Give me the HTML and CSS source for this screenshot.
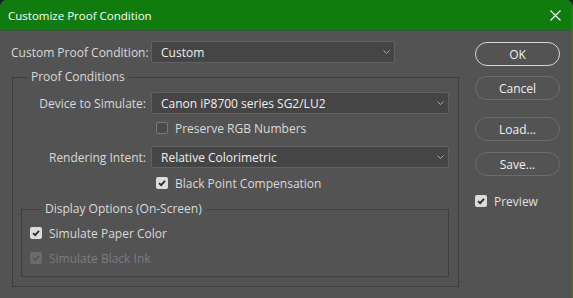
FILE: index.html
```html
<!DOCTYPE html>
<html lang="en">
<head>
    <meta charset="UTF-8">
    <title>Customize Proof Condition</title>
    <link rel="stylesheet" href="styles.css">
</head>
<body>
<div class="window">
    <header class="titlebar">
        <span class="title">Customize Proof Condition</span>
        <svg class="close" width="11" height="11" viewBox="0 0 11 11"><path d="M0.5 0.5L10.5 10.5M10.5 0.5L0.5 10.5" stroke="#fff" stroke-width="1.1" fill="none"/></svg>
    </header>

    <div class="content">
        <div class="main">
            <div class="row top-row">
                <label class="label">Custom Proof Condition:</label>
                <div class="select short">Custom
                    <svg class="chev" width="7" height="4" viewBox="0 0 7 4"><path d="M0.5 0.5L3.5 3.5L6.5 0.5" stroke="#a8a8a8" fill="none"/></svg>
                </div>
            </div>

            <!-- Proof Conditions group -->
            <fieldset class="group proof">
                <legend>Proof Conditions</legend>
                <div class="row">
                    <label class="label">Device to Simulate:</label>
                    <div class="select">Canon iP8700 series SG2/LU2
                        <svg class="chev" width="7" height="4" viewBox="0 0 7 4"><path d="M0.5 0.5L3.5 3.5L6.5 0.5" stroke="#a8a8a8" fill="none"/></svg>
                    </div>
                </div>
                <div class="row check-line first">
                    <span></span>
                    <div class="check"><span class="box"></span>Preserve RGB Numbers</div>
                </div>
                <div class="row intent">
                    <label class="label">Rendering Intent:</label>
                    <div class="select">Relative Colorimetric
                        <svg class="chev" width="7" height="4" viewBox="0 0 7 4"><path d="M0.5 0.5L3.5 3.5L6.5 0.5" stroke="#a8a8a8" fill="none"/></svg>
                    </div>
                </div>
                <div class="row check-line second">
                    <span></span>
                    <div class="check"><span class="box checked"><svg width="12" height="12" viewBox="0 0 12 12"><path d="M3 6.2L5.1 8.2L9 3.8" stroke="#2b2b2b" stroke-width="1.8" fill="none"/></svg></span>Black Point Compensation</div>
                </div>

                <!-- Display Options group -->
                <fieldset class="group display">
                    <legend>Display Options (On-Screen)</legend>
                    <div class="check paper"><span class="box checked"><svg width="12" height="12" viewBox="0 0 12 12"><path d="M3 6.2L5.1 8.2L9 3.8" stroke="#2b2b2b" stroke-width="1.8" fill="none"/></svg></span>Simulate Paper Color</div>
                    <div class="check ink disabled"><span class="box checked"><svg width="12" height="12" viewBox="0 0 12 12"><path d="M3 6.2L5.1 8.2L9 3.8" stroke="#555" stroke-width="1.8" fill="none"/></svg></span>Simulate Black Ink</div>
                </fieldset>
            </fieldset>
        </div>

        <div class="side">
            <button class="btn default">OK</button>
            <button class="btn cancel">Cancel</button>
            <button class="btn load">Load...</button>
            <button class="btn save">Save...</button>
            <div class="check preview"><span class="box checked"><svg width="12" height="12" viewBox="0 0 12 12"><path d="M3 6.2L5.1 8.2L9 3.8" stroke="#2b2b2b" stroke-width="1.8" fill="none"/></svg></span>Preview</div>
        </div>
    </div>
</div>
</body>
</html>
```

FILE: styles.css
```css
body {
    margin: 0;
    background: #1e1e1e;
    font-family: "Open Sans", "Noto Sans", sans-serif;
    font-size: 12px;
    color: #dadada;
}
.window {
    width: 573px;
    height: 298px;
    background: #535353;
    border-radius: 7px 7px 0 0;
    overflow: hidden;
    box-sizing: border-box;
    border-right: 1px solid #3c7d25;
}
.titlebar {
    height: 31px;
    background: #107c10;
    display: flex;
    align-items: center;
    justify-content: space-between;
    padding: 0 11px 0 8px;
    box-sizing: border-box;
    border-bottom: 1px solid #4a4a4a;
}
.title {
    color: #fff;
    font-size: 11.5px;
}
.content {
    display: flex;
    padding: 10px 0 0 11px;
}
.main {
    width: 448px;
}
.row {
    display: grid;
    grid-template-columns: 133px 1fr;
    column-gap: 5px;
    align-items: center;
}
.top-row {
    grid-template-columns: 135px 244px;
}
.label {
    text-align: right;
    white-space: nowrap;
}
.select {
    height: 22px;
    box-sizing: border-box;
    background: #454545;
    border: 1px solid #626262;
    border-radius: 2px;
    color: #f0f0f0;
    display: flex;
    align-items: center;
    justify-content: space-between;
    padding: 0 4px 0 9px;
    white-space: nowrap;
}
.group {
    border: 1px solid #3e3e3e;
    margin: 0;
    min-width: 0;
}
.group legend {
    line-height: 16px;
    padding: 0 4px;
    color: #dadada;
}
.proof {
    margin: 6px 0 0 1px;
    padding: 7px 9px 9px 0;
}
.proof legend {
    margin-left: 14px;
}
.check-line {
    height: 16px;
}
.check-line.first {
    margin: 6px 0 10px;
}
.check-line.second {
    margin: 7px 0 10px;
}
.check-line .check {
    padding-left: 5px;
}
.check {
    display: flex;
    align-items: center;
    height: 16px;
    white-space: nowrap;
}
.box {
    width: 12px;
    height: 12px;
    box-sizing: border-box;
    border: 1px solid #7a7a7a;
    border-radius: 2px;
    background: #4a4a4a;
    margin-right: 7px;
    display: flex;
}
.box.checked {
    border: none;
    background: #dcdcdc;
}
.disabled {
    color: #7c7c7c;
}
.disabled .box.checked {
    background: #6b6b6b;
}
.display {
    margin: 0 0 0 8px;
    padding: 8px 0 10px 8px;
}
.display legend {
    margin-left: 11px;
}
.ink {
    margin-top: 9px;
}
.side {
    width: 85px;
    margin-left: 16px;
    display: flex;
    flex-direction: column;
}
.btn {
    height: 24px;
    background: transparent;
    border: 1px solid #6c6c6c;
    border-radius: 12px;
    color: #f0f0f0;
    font-family: inherit;
    font-size: 12px;
    padding: 0;
}
.btn.default {
    margin-top: 1px;
    border: 1.5px solid #d6d6d6;
}
.btn.cancel {
    margin-top: 10px;
}
.btn.load {
    margin-top: 17px;
}
.btn.save {
    margin-top: 11px;
}
.preview {
    margin-top: 17px;
    color: #e0e0e0;
}
```
